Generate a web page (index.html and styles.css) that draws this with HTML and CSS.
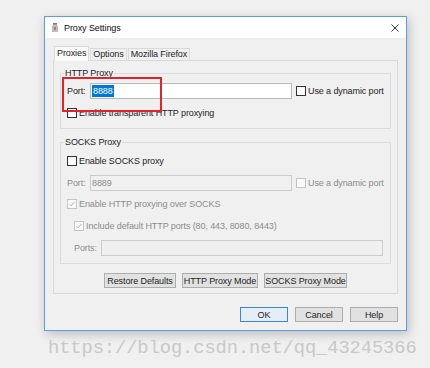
FILE: index.html
```html
<!DOCTYPE html>
<html lang="en">
<head>
    <meta charset="UTF-8">
    <title>Proxy Settings</title>
    <link rel="stylesheet" href="styles.css">
</head>
<body>

<div class="screen">
    <div class="window">
        <div class="titlebar">
            <svg class="app-icon" viewBox="0 0 6 9">
                <path d="M1 0h4v2l1 1v6H0V3l1-1z" fill="#bdbdbd"/>
                <rect x="1" y="0" width="4" height="1.5" fill="#7a7a7a"/>
                <rect x="2" y="4" width="2" height="3" fill="#d8706a"/>
            </svg>
            <span class="title">Proxy Settings</span>
            <svg class="close" viewBox="0 0 8 8">
                <path d="M0.5 0.5L7.5 7.5M7.5 0.5L0.5 7.5" stroke="#333" stroke-width="1"/>
            </svg>
        </div>

        <div class="dialog">
            <div class="tabs">
                <div class="tab active">Proxies</div>
                <div class="tab">Options</div>
                <div class="tab">Mozilla Firefox</div>
            </div>

            <div class="panel">
                <fieldset class="group">
                    <legend>HTTP Proxy</legend>
                    <div class="row port-row">
                        <span class="field-label">Port:</span>
                        <div class="input"><span class="selected">8888</span></div>
                        <label class="check dynamic"><span class="box"></span>Use a dynamic port</label>
                        <div class="marker"></div>
                    </div>
                    <label class="check row-check"><span class="box"></span>Enable transparent HTTP proxying</label>
                </fieldset>

                <fieldset class="group socks">
                    <legend>SOCKS Proxy</legend>
                    <label class="check first"><span class="box"></span>Enable SOCKS proxy</label>
                    <div class="row row-gap disabled">
                        <span class="field-label">Port:</span>
                        <div class="input off">8889</div>
                        <label class="check dynamic"><span class="box off"></span>Use a dynamic port</label>
                    </div>
                    <label class="check row-check2 disabled">
                        <span class="box off">
                            <svg viewBox="0 0 10 10"><path d="M2 5.2l2 2 4-4.6" fill="none" stroke="#a8a8a8" stroke-width="1.2"/></svg>
                        </span>Enable HTTP proxying over SOCKS
                    </label>
                    <label class="check row-check3 indent disabled">
                        <span class="box off">
                            <svg viewBox="0 0 10 10"><path d="M2 5.2l2 2 4-4.6" fill="none" stroke="#a8a8a8" stroke-width="1.2"/></svg>
                        </span>Include default HTTP ports (80, 443, 8080, 8443)
                    </label>
                    <div class="row row-gap indent disabled">
                        <span class="field-label ports">Ports:</span>
                        <div class="input off wide"></div>
                    </div>
                </fieldset>

                <div class="mode-buttons">
                    <button class="btn restore">Restore Defaults</button>
                    <button class="btn http">HTTP Proxy Mode</button>
                    <button class="btn socks-mode">SOCKS Proxy Mode</button>
                </div>
            </div>

            <div class="footer-buttons">
                <button class="btn main default">OK</button>
                <button class="btn main">Cancel</button>
                <button class="btn main">Help</button>
            </div>
        </div>
    </div>

    <div class="watermark">https://blog.csdn.net/qq_43245366</div>
</div>

</body>
</html>
```

FILE: styles.css
```css
*{
    box-sizing: border-box;
}

body{
    margin: 0;
    background-color: #f0f0f0;
    font-family: "Liberation Sans", Arial, sans-serif;
    font-size: 9px;
    letter-spacing: -0.1px;
    color: #1e1e1e;
}

.screen{
    height: 368px;
    padding: 16px 0 0 44px;
    overflow: hidden;
}

.window{
    width: 363px;
    height: 315px;
    border: 1px solid #5b9fe2;
    background-color: #f0f0f0;
    box-shadow: 2px 3px 10px rgba(0, 0, 0, 0.22);
}

.titlebar{
    height: 21px;
    display: flex;
    align-items: center;
    padding: 0 7px;
    background-color: #fff;
}

.app-icon{
    width: 6px;
    height: 9px;
    margin-right: 6px;
}

.title{
    flex: 1;
    color: #111;
}

.close{
    width: 8px;
    height: 8px;
}

.dialog{
    padding: 8px 8px 0 8px;
}

/* tabs */
.tabs{
    display: flex;
    align-items: flex-end;
    height: 14px;
    padding-left: 1px;
}

.tab{
    height: 12px;
    line-height: 11px;
    padding: 0 2px;
    border: 1px solid #d9d9d9;
    border-bottom: none;
    background-color: #f0f0f0;
}

.tab + .tab{
    margin-left: 1px;
}

.tab.active{
    height: 15px;
    margin-bottom: -1px;
    line-height: 12px;
    background-color: #fafafa;
    position: relative;
    z-index: 1;
}

.panel{
    height: 234px;
    border: 1px solid #d9d9d9;
    padding: 7px 6px 0 6px;
}

/* group boxes */
.group{
    margin: 0;
    min-width: 0;
    border: 1px solid #dcdcdc;
    padding: 4px 6px 8px 6px;
}

.group legend{
    padding: 0 1px;
    margin-left: -3px;
    line-height: 11px;
    color: #222;
}

.group.socks{
    margin-top: 8px;
    padding: 6px 6px 7px 6px;
}

.row{
    display: flex;
    align-items: center;
    height: 16px;
}

.port-row{
    position: relative;
}

.field-label{
    width: 23px;
}

.field-label.ports{
    width: 27px;
}

.input{
    width: 202px;
    height: 16px;
    line-height: 14px;
    padding-left: 1px;
    border: 1px solid #b9b9b9;
    background-color: #fff;
}

.input.off{
    border-color: #cccccc;
    background-color: #f0f0f0;
    color: #8c8c8c;
}

.input.wide{
    width: 282px;
}

.selected{
    display: inline-block;
    padding: 0 1px;
    line-height: 12px;
    background-color: #0078d7;
    color: #fff;
}

.check{
    display: flex;
    align-items: center;
    height: 14px;
}

.check .box{
    width: 10px;
    height: 10px;
    margin-right: 2px;
    border: 1px solid #333;
    background-color: #fff;
}

.check .box.off{
    border-color: #c6c6c6;
    background-color: #fafafa;
}

.check .box svg{
    display: block;
    width: 8px;
    height: 8px;
}

.check.dynamic{
    margin-left: 4px;
}

.disabled{
    color: #8c8c8c;
}

.row-check{
    margin-top: 7px;
}

.row-gap{
    margin-top: 7px;
}

.row-check2{
    margin-top: 6px;
}

.row-check3{
    margin-top: 8px;
}

.indent{
    margin-left: 7px;
}

/* red annotation box */
.marker{
    position: absolute;
    left: -5px;
    top: -6px;
    width: 100px;
    height: 35px;
    border: 2px solid #e5222a;
}

/* buttons */
.btn{
    height: 15px;
    padding: 0;
    font-family: inherit;
    font-size: 9px;
    letter-spacing: -0.1px;
    color: #1e1e1e;
    background-color: #e1e1e1;
    border: 1px solid #adadad;
}

.mode-buttons{
    display: flex;
    justify-content: center;
    gap: 6px;
    margin-top: 9px;
}

.btn.restore{
    width: 72px;
}

.btn.http{
    width: 76px;
}

.btn.socks-mode{
    width: 83px;
}

.footer-buttons{
    display: flex;
    justify-content: flex-end;
    gap: 7px;
    margin-top: 13px;
}

.btn.main{
    width: 48px;
}

.btn.default{
    border-color: #3a87d6;
    background-color: #e5edf6;
}

.watermark{
    margin: 7px 0 0 4px;
    font-family: "Liberation Mono", monospace;
    font-size: 18.8px;
    line-height: 20px;
    color: #c8c8c8;
    white-space: nowrap;
}
```
